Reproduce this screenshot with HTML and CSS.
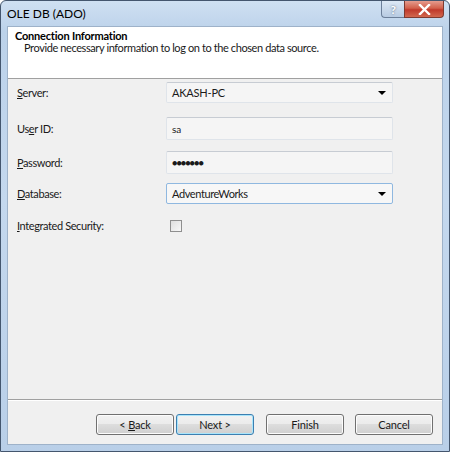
FILE: index.html
```html
<!DOCTYPE html>
<html lang="en">
<head>
    <meta charset="UTF-8">
    <title>OLE DB (ADO)</title>
    <link rel="stylesheet" href="styles.css">
</head>
<body>

<div class="window">
    <div class="titlebar">
        <span class="title">OLE DB (ADO)</span>
        <div class="caption-btns">
            <div class="cap-btn help-btn">?</div>
            <div class="cap-btn close-btn">
                <svg width="13" height="11" viewBox="0 0 13 11">
                    <path d="M2 1 L11 10 M11 1 L2 10" stroke="#fff" stroke-width="2.4" stroke-linecap="square"/>
                </svg>
            </div>
        </div>
    </div>

    <div class="client">
        <div class="header">
            <div class="header-title">Connection Information</div>
            <div class="header-sub">Provide necessary information to log on to the chosen data source.</div>
        </div>

        <div class="form">
            <div class="row row-server">
                <label><u>S</u>erver:</label>
                <div class="combo">
                    <span>AKASH-PC</span>
                    <span class="arrow"></span>
                </div>
            </div>
            <div class="row row-user">
                <label>Us<u>e</u>r ID:</label>
                <div class="textbox">sa</div>
            </div>
            <div class="row row-pass">
                <label><u>P</u>assword:</label>
                <div class="textbox dots">&#9679;&#9679;&#9679;&#9679;&#9679;&#9679;&#9679;</div>
            </div>
            <div class="row row-db">
                <label><u>D</u>atabase:</label>
                <div class="combo focus">
                    <span>AdventureWorks</span>
                    <span class="arrow"></span>
                </div>
            </div>
            <div class="row row-check">
                <label><u>I</u>ntegrated Security:</label>
                <div class="checkbox"></div>
            </div>
        </div>

        <div class="footer">
            <button class="btn">&lt; <u>B</u>ack</button>
            <button class="btn btn-default">Next &gt;</button>
            <button class="btn btn-finish">Finish</button>
            <button class="btn btn-cancel">Cancel</button>
        </div>
    </div>
</div>

</body>
</html>
```

FILE: styles.css
```css
body {
    margin: 0;
    font-family: Lato, "Noto Sans", sans-serif;
    font-size: 11px;
    letter-spacing: -0.4px;
    color: #1a1a1a;
    background: #fff;
}
.window {
    width: 450px;
    height: 452px;
    box-sizing: border-box;
    border: 1px solid #44566e;
    border-radius: 6px 6px 0 0;
    background: linear-gradient(180deg, #cfe0f2 0px, #bcd2ea 30px, #c4d8ee 200px, #b9cfe8 452px);
    display: flex;
    flex-direction: column;
    padding: 0 6px 6px 6px;
}
.titlebar {
    height: 25px;
    display: flex;
    justify-content: space-between;
    align-items: flex-start;
}
.title {
    margin-top: 5px;
    font-size: 12px;
    letter-spacing: 0;
    color: #000;
}
.caption-btns {
    display: flex;
    margin-right: -1px;
}
.cap-btn {
    height: 17px;
    border: 1px solid #6c7f99;
    border-top: none;
    box-sizing: border-box;
    display: flex;
    align-items: center;
    justify-content: center;
}
.help-btn {
    width: 23px;
    border-radius: 0 0 0 4px;
    border-right: none;
    background: linear-gradient(180deg, #dce8f5, #b8cbe2);
    color: #fff;
    font-weight: bold;
    font-size: 12px;
    text-shadow: 0 0 2px #4b5c74;
}
.close-btn {
    width: 40px;
    border-radius: 0 0 4px 0;
    border-color: #7e3a30;
    background: linear-gradient(180deg, #e59c8e 0%, #d2604b 45%, #c0392b 55%, #d2674e 100%);
}
.client {
    flex: 1;
    border: 1px solid #9eb2c9;
    background: #f0f0f0;
    display: flex;
    flex-direction: column;
}
.header {
    height: 52px;
    background: #fff;
    border-bottom: 1px solid #a0a0a0;
    padding: 3px 0 0 7px;
    box-sizing: border-box;
}
.header-title {
    font-weight: bold;
    letter-spacing: -0.2px;
    line-height: 12px;
    color: #000;
}
.header-sub {
    padding-left: 9px;
    line-height: 12px;
}
.form {
    flex: 1;
    padding-top: 3px;
    border-bottom: 1px solid #a0a0a0;
    box-shadow: 0 1px 0 #fff;
}
.row {
    display: flex;
    align-items: center;
}
.row label {
    width: 158px;
    padding-left: 9px;
    box-sizing: border-box;
}
.row-server { height: 21px; }
.row-user { height: 23px; margin-top: 14px; }
.row-pass { height: 23px; margin-top: 11px; }
.row-db { height: 21px; margin-top: 9px; }
.row-check { height: 13px; margin-top: 15px; }
.combo, .textbox {
    width: 227px;
    height: 100%;
    box-sizing: border-box;
    border: 1px solid #dfe4ea;
    border-top-color: #c7ccd3;
    border-radius: 2px;
    background: #f5f5f5;
    display: flex;
    align-items: center;
    padding-left: 5px;
}
.combo {
    justify-content: space-between;
    padding-right: 6px;
    letter-spacing: -0.2px;
}
.combo.focus {
    border-color: #8fb8e0;
    background: #f7f7f7;
    letter-spacing: -0.4px;
}
.textbox {
    font-size: 10px;
    letter-spacing: 0;
}
.dots {
    font-size: 9px;
    letter-spacing: -1px;
}
.arrow {
    width: 0;
    height: 0;
    border-left: 4px solid transparent;
    border-right: 4px solid transparent;
    border-top: 4px solid #000;
}
.checkbox {
    width: 12px;
    height: 12px;
    margin-left: 4px;
    box-sizing: border-box;
    border: 1px solid #8f8f8f;
    background: linear-gradient(135deg, #dedede, #f8f8f8);
}
.footer {
    height: 44px;
    display: flex;
    align-items: flex-start;
    padding-top: 14px;
    padding-left: 88px;
    box-sizing: border-box;
}
.btn {
    width: 78px;
    height: 21px;
    font-family: inherit;
    font-size: 11px;
    letter-spacing: -0.2px;
    border: 1px solid #707070;
    border-radius: 3px;
    background: linear-gradient(180deg, #f2f2f2 0%, #ebebeb 49%, #dddddd 50%, #cfcfcf 100%);
    box-shadow: inset 0 0 0 1px #fcfcfc;
    padding: 0;
    margin: 0;
    color: #1a1a1a;
}
.btn-default {
    margin-left: 2px;
    border-color: #3c7fb1;
    box-shadow: inset 0 0 0 1px #a9e5fb;
}
.btn-finish { margin-left: 12px; }
.btn-cancel { margin-left: 11px; }
```
